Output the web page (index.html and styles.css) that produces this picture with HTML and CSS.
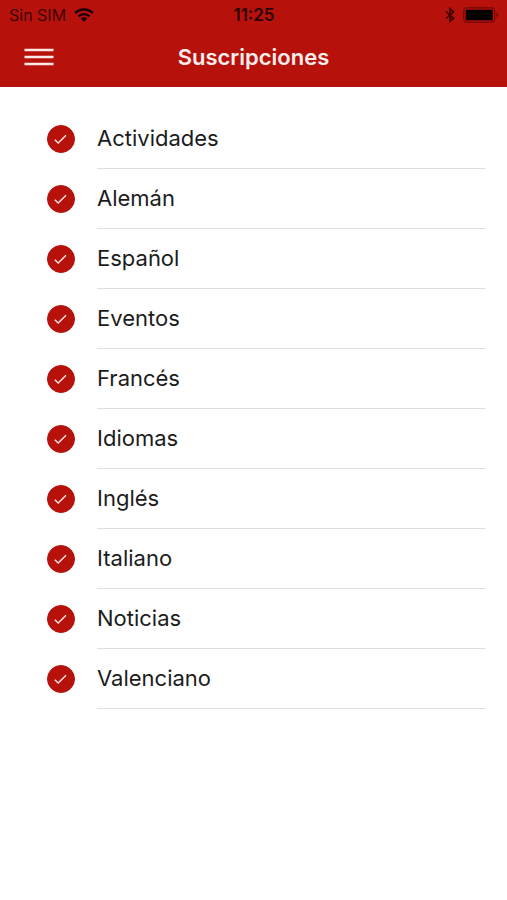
FILE: index.html
```html
<!DOCTYPE html>
<html lang="es">
<head>
<meta charset="utf-8">
<meta name="viewport" content="width=device-width, initial-scale=1">
<title>Suscripciones</title>
<link rel="stylesheet" href="styles.css">
</head>
<body>
<svg class="defs" aria-hidden="true">
  <symbol id="tick" viewBox="0 0 28 28"><path d="M7.8 14.8 11.2 18 19 10.2" fill="none" stroke="currentColor" stroke-width="1.4"/></symbol>
</svg>
<header class="header">
  <div class="status">
    <div class="status-side">
      <span>Sin SIM</span>
      <svg class="wifi" viewBox="0 0 20 14" aria-hidden="true">
        <g fill="none" stroke="currentColor" stroke-width="2.4">
          <path d="M1.1 5.2a12.6 12.6 0 0 1 17.8 0"/>
          <path d="M4.3 8.5a8 8 0 0 1 11.4 0"/>
        </g>
        <path d="M10 13.8 6.8 10.6a4.5 4.5 0 0 1 6.4 0z" fill="currentColor"/>
      </svg>
    </div>
    <span class="time">11:25</span>
    <div class="status-side status-end">
      <svg class="bluetooth" viewBox="0 0 10 16" aria-hidden="true"><path d="M1 4.5 8.6 11.2 5 14.4V1.6L8.6 4.8 1 11.5" fill="none" stroke="currentColor" stroke-width="1.6"/></svg>
      <svg class="battery" viewBox="0 0 36 16" aria-hidden="true">
        <rect x=".7" y=".9" width="31" height="14.2" rx="3" fill="none" stroke="#6e0906" stroke-width="1.1"/>
        <rect x="2.7" y="2.8" width="27" height="10.4" rx="1" fill="#000"/>
        <path d="M33.4 5.6c2.4.9 2.4 3.9 0 4.8z" fill="#6e0906"/>
      </svg>
    </div>
  </div>
  <div class="navbar">
    <button class="menu" type="button" aria-label="Menú">
      <svg viewBox="0 0 30 18" aria-hidden="true"><path d="M.5 2h29M.5 9h29M.5 16h29" stroke="currentColor" stroke-width="2.6"/></svg>
    </button>
    <h1 class="title">Suscripciones</h1>
  </div>
</header>
<main>
  <ul class="list">
    <li><label class="row"><span class="check"><input type="checkbox" checked><svg aria-hidden="true"><use href="#tick"/></svg></span><span class="name">Actividades</span></label></li>
    <li><label class="row"><span class="check"><input type="checkbox" checked><svg aria-hidden="true"><use href="#tick"/></svg></span><span class="name">Alemán</span></label></li>
    <li><label class="row"><span class="check"><input type="checkbox" checked><svg aria-hidden="true"><use href="#tick"/></svg></span><span class="name">Español</span></label></li>
    <li><label class="row"><span class="check"><input type="checkbox" checked><svg aria-hidden="true"><use href="#tick"/></svg></span><span class="name">Eventos</span></label></li>
    <li><label class="row"><span class="check"><input type="checkbox" checked><svg aria-hidden="true"><use href="#tick"/></svg></span><span class="name">Francés</span></label></li>
    <li><label class="row"><span class="check"><input type="checkbox" checked><svg aria-hidden="true"><use href="#tick"/></svg></span><span class="name">Idiomas</span></label></li>
    <li><label class="row"><span class="check"><input type="checkbox" checked><svg aria-hidden="true"><use href="#tick"/></svg></span><span class="name">Inglés</span></label></li>
    <li><label class="row"><span class="check"><input type="checkbox" checked><svg aria-hidden="true"><use href="#tick"/></svg></span><span class="name">Italiano</span></label></li>
    <li><label class="row"><span class="check"><input type="checkbox" checked><svg aria-hidden="true"><use href="#tick"/></svg></span><span class="name">Noticias</span></label></li>
    <li><label class="row"><span class="check"><input type="checkbox" checked><svg aria-hidden="true"><use href="#tick"/></svg></span><span class="name">Valenciano</span></label></li>
  </ul>
</main>
</body>
</html>
```
FILE: styles.css
```css
* { box-sizing: border-box; }

body {
  margin: 0;
  background: #fff;
  color: #1c1c1c;
  font-family: Inter, "Liberation Sans", sans-serif;
}

svg { display: block; }
.defs { position: absolute; width: 0; height: 0; }

.header {
  padding-bottom: 1px;
  background: #b7110b;
}

.status {
  display: grid;
  grid-template-columns: 1fr auto 1fr;
  align-items: center;
  height: 28px;
  padding: 2px 8px 0 9px;
  color: #3c0402;
  font-size: 16px;
  line-height: 20px;
}

.status-side {
  display: flex;
  align-items: center;
  gap: 8px;
}

.status-end { justify-content: flex-end; }

.time {
  color: #2a0201;
  font-size: 17px;
  font-weight: 600;
}

.wifi { width: 20px; height: 14px; color: #1c0201; }
.bluetooth { width: 10px; height: 16px; }
.battery { width: 36px; height: 16px; }

.navbar {
  display: grid;
  grid-template-columns: 56px 1fr 56px;
  align-items: center;
  height: 58px;
}

.menu {
  padding: 12px 2px 12px 24px;
  border: 0;
  background: none;
  color: #ffe9e7;
}

.menu svg { width: 30px; height: 18px; }

.title {
  margin: 0;
  color: #ffeeec;
  font-size: 22px;
  font-weight: 600;
  line-height: 28px;
  text-align: center;
}

.list {
  margin: 0;
  padding: 22px 22px 0 46px;
  list-style: none;
}

.row {
  display: flex;
  align-items: center;
  gap: 21px;
}

.check {
  display: grid;
  width: 30px;
  height: 30px;
}

.check > * { grid-area: 1 / 1; }

.check input {
  appearance: none;
  width: 28px;
  height: 28px;
  margin: 1px;
  border: 1px solid #b7110b;
  border-radius: 50%;
}

.check input:checked { background: #b7110b; }

.check svg {
  width: 28px;
  height: 28px;
  margin: 1px;
  color: #ffe9e7;
  pointer-events: none;
}

.check input:not(:checked) + svg { visibility: hidden; }

.name {
  flex: 1;
  height: 60px;
  border-bottom: 1px solid #dedede;
  font-size: 22px;
  line-height: 58px;
}
```
